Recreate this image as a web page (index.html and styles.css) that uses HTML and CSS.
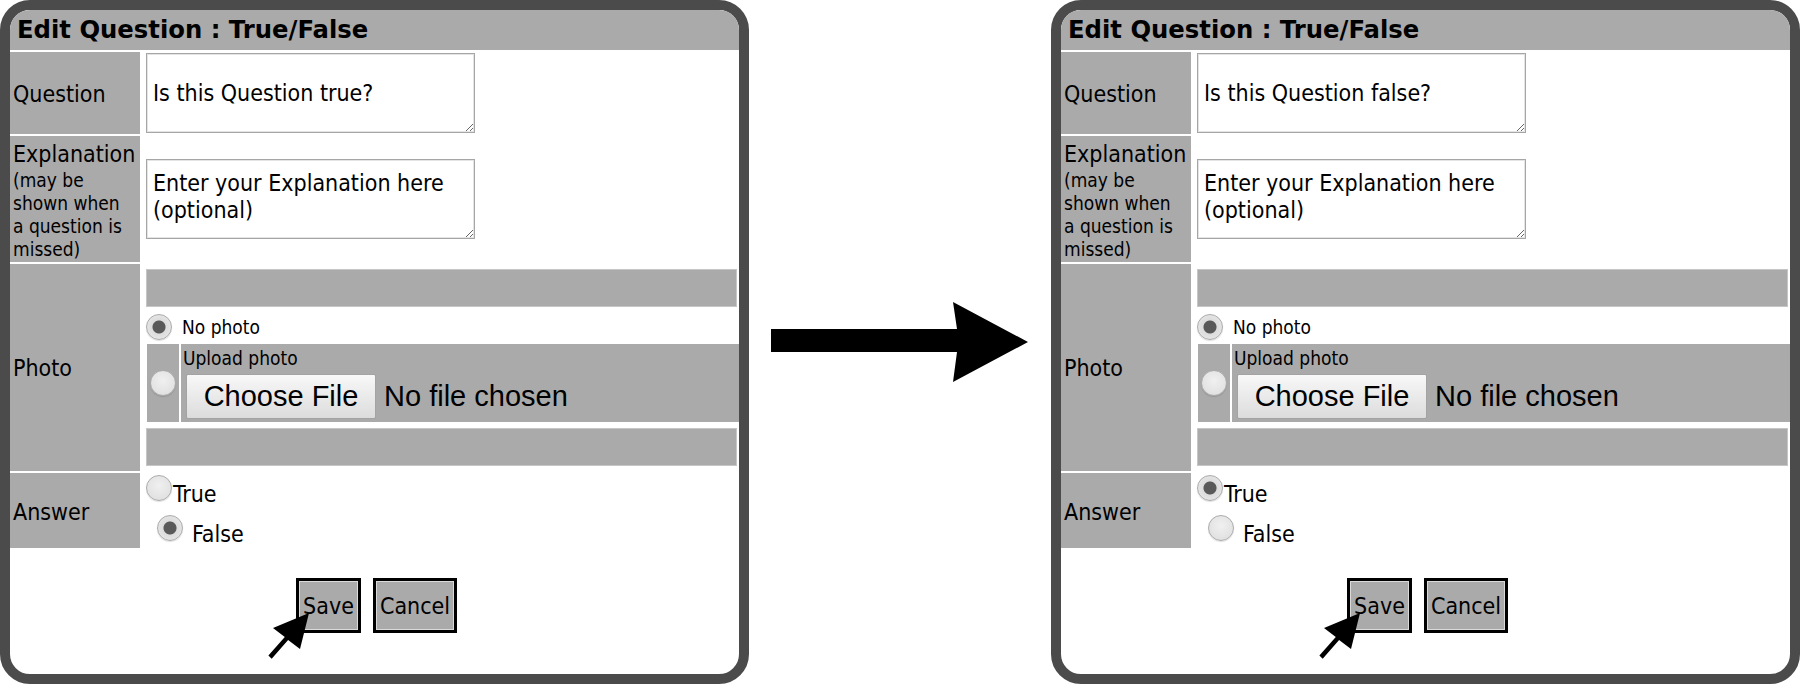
FILE: index.html
```html
<!DOCTYPE html>
<html lang="en">
<head>
<meta charset="utf-8">
<title>Edit Question : True/False</title>
<link rel="stylesheet" href="styles.css">
</head>
<body>
<div class="stage">
  <section class="panel">
    <h1 class="panel-title">Edit Question : True/False</h1>
    <div class="form-grid">
      <div class="lbl lbl-center">Question</div>
      <div class="cell"><textarea class="ta ta-question">Is this Question true?</textarea></div>

      <div class="lbl lbl-top">Explanation<span class="lbl-note">(may be shown when a question is missed)</span></div>
      <div class="cell cell-center"><textarea class="ta ta-expl">Enter your Explanation here (optional)</textarea></div>

      <div class="lbl lbl-center">Photo</div>
      <div class="cell photo-cell">
        <div class="bar"></div>
        <label class="nophoto"><input type="radio" class="radio" name="photo1" checked><span>No photo</span></label>
        <div class="upload">
          <div class="upload-radio"><input type="radio" class="radio" name="photo1"></div>
          <div class="upload-body">
            <div class="upload-title">Upload photo</div>
            <div class="file-row"><button class="file-btn" type="button">Choose File</button><span class="file-name">No file chosen</span></div>
          </div>
        </div>
        <div class="bar bar-last"></div>
      </div>

      <div class="lbl lbl-center lbl-answer">Answer</div>
      <div class="cell answer-cell">
        <label class="ans ans-true"><input type="radio" class="radio" name="ans1"><span class="ans-text">True</span></label>
        <label class="ans ans-false"><input type="radio" class="radio" name="ans1" checked><span class="ans-text">False</span></label>
      </div>
    </div>
    <div class="actions">
      <span class="save-wrap">
        <button class="act act-save" type="button">Save</button>
        <svg class="cursor" width="45" height="56" viewBox="0 0 45 56"><polygon points="41,8 5,23 16.8,32 0.4,50.5 3.7,53.8 20.1,35 32,44" fill="#000"/></svg>
      </span>
      <button class="act act-cancel" type="button">Cancel</button>
    </div>
  </section>

  <div class="between">
    <svg width="302" height="684" viewBox="0 0 302 684"><polygon points="22,329 208,329 204,302 279,342 204,382 208,352 22,352" fill="#000"/></svg>
  </div>

  <section class="panel">
    <h1 class="panel-title">Edit Question : True/False</h1>
    <div class="form-grid">
      <div class="lbl lbl-center">Question</div>
      <div class="cell"><textarea class="ta ta-question">Is this Question false?</textarea></div>

      <div class="lbl lbl-top">Explanation<span class="lbl-note">(may be shown when a question is missed)</span></div>
      <div class="cell cell-center"><textarea class="ta ta-expl">Enter your Explanation here (optional)</textarea></div>

      <div class="lbl lbl-center">Photo</div>
      <div class="cell photo-cell">
        <div class="bar"></div>
        <label class="nophoto"><input type="radio" class="radio" name="photo2" checked><span>No photo</span></label>
        <div class="upload">
          <div class="upload-radio"><input type="radio" class="radio" name="photo2"></div>
          <div class="upload-body">
            <div class="upload-title">Upload photo</div>
            <div class="file-row"><button class="file-btn" type="button">Choose File</button><span class="file-name">No file chosen</span></div>
          </div>
        </div>
        <div class="bar bar-last"></div>
      </div>

      <div class="lbl lbl-center lbl-answer">Answer</div>
      <div class="cell answer-cell">
        <label class="ans ans-true"><input type="radio" class="radio" name="ans2" checked><span class="ans-text">True</span></label>
        <label class="ans ans-false"><input type="radio" class="radio" name="ans2"><span class="ans-text">False</span></label>
      </div>
    </div>
    <div class="actions">
      <span class="save-wrap">
        <button class="act act-save" type="button">Save</button>
        <svg class="cursor" width="45" height="56" viewBox="0 0 45 56"><polygon points="41,8 5,23 16.8,32 0.4,50.5 3.7,53.8 20.1,35 32,44" fill="#000"/></svg>
      </span>
      <button class="act act-cancel" type="button">Cancel</button>
    </div>
  </section>
</div>
</body>
</html>
```

FILE: styles.css
```css
* { box-sizing: border-box; }

html, body {
  margin: 0;
  padding: 0;
  background: #fff;
}

body {
  width: 1800px;
  height: 684px;
  overflow: hidden;
  font-family: "DejaVu Sans Condensed", "DejaVu Sans", sans-serif;
  color: #000;
}

.stage {
  display: flex;
  height: 684px;
}

.panel {
  flex: none;
  width: 749px;
  height: 684px;
  border: 10px solid #4b4b4b;
  border-radius: 30px;
  overflow: hidden;
  background: #fff;
  display: flex;
  flex-direction: column;
}

.panel-title {
  margin: 0;
  height: 40px;
  background: #aaaaaa;
  font-family: "DejaVu Sans", sans-serif;
  font-weight: bold;
  font-size: 24.3px;
  line-height: 40px;
  padding-left: 7px;
  white-space: nowrap;
}

.form-grid {
  display: grid;
  grid-template-columns: 130px 1fr;
  column-gap: 5px;
  row-gap: 2px;
  margin-top: 2px;
}

.lbl {
  background: #aaaaaa;
  font-size: 23px;
  line-height: 27.8px;
  padding: 0 3px;
}

.lbl-center {
  display: flex;
  align-items: center;
  padding-top: 4px;
}

.lbl-answer {
  padding-top: 6px;
}

.lbl-top {
  padding: 5px 3px 1px;
}

.lbl-note {
  display: block;
  max-width: 116px;
  font-size: 19px;
  line-height: 23px;
}

.cell {
  padding: 1px 0 1px 1px;
}

.cell-center {
  display: flex;
  align-items: center;
}

.ta {
  display: block;
  width: 329px;
  height: 80px;
  margin: 0;
  border: 1px solid #a6a6a6;
  box-shadow: inset 0 0 0 1px #e4e4e4;
  font-family: "DejaVu Sans Condensed", "DejaVu Sans", sans-serif;
  font-size: 23px;
  line-height: 27.5px;
  padding: 10px 6px 6px;
  color: #000;
  background: #fff;
  overflow: hidden;
  resize: both;
}

.ta-question {
  padding-top: 26px;
}

.photo-cell {
  padding: 5px 0 5px 1px;
}

.bar {
  height: 38px;
  background: #aaaaaa;
  border: 1px solid #c6c6c6;
  margin-right: 2px;
}

.bar-last {
  margin-top: 6px;
}

.nophoto {
  display: flex;
  align-items: center;
  gap: 10px;
  height: 37px;
  padding-top: 3px;
  font-size: 19px;
}

.upload {
  display: flex;
  gap: 2px;
  height: 78px;
  margin-left: 1px;
}

.upload-radio {
  flex: none;
  width: 32px;
  background: #aaaaaa;
  display: flex;
  align-items: center;
  justify-content: center;
}

.upload-body {
  flex: 1;
  background: #aaaaaa;
  padding: 3px 0 0 2px;
}

.upload-title {
  font-size: 19px;
  line-height: 23px;
}

.file-row {
  display: flex;
  align-items: center;
  margin-top: 4px;
  padding-left: 3px;
}

.file-btn {
  flex: none;
  width: 190px;
  height: 45px;
  padding: 0;
  margin: 0;
  font-family: "Liberation Sans", Arial, sans-serif;
  font-size: 29px;
  color: #000;
  border: 1px solid #a3a3a3;
  border-radius: 2px;
  background: linear-gradient(#f8f8f8, #dcdcdc);
}

.file-name {
  margin-left: 8px;
  font-family: "Liberation Sans", Arial, sans-serif;
  font-size: 29px;
  white-space: nowrap;
}

.radio {
  -webkit-appearance: none;
  appearance: none;
  flex: none;
  width: 26px;
  height: 26px;
  margin: 0;
  border-radius: 50%;
  border: 1px solid #ababab;
  background: radial-gradient(circle at 50% 40%, #f0f0f0 0, #dcdcdc 100%);
  box-shadow: 0 1px 1px rgba(0, 0, 0, 0.12);
}

.radio:checked {
  background: radial-gradient(circle, #595959 0 6px, #dcdcdc 7px, #ececec 100%);
}

.answer-cell {
  padding: 0 0 0 1px;
}

.ans {
  display: flex;
  align-items: flex-start;
  font-size: 23px;
  line-height: 27.6px;
}

.ans-true {
  height: 37px;
}

.ans-true .radio {
  margin-top: 2px;
}

.ans-true .ans-text {
  margin: 8px 0 0 1px;
}

.ans-false {
  height: 38px;
}

.ans-false .radio {
  margin: 5px 0 0 11px;
}

.ans-false .ans-text {
  margin: 11px 0 0 9px;
}

.actions {
  display: flex;
  justify-content: center;
  gap: 12px;
  margin-top: 30px;
  padding-left: 4px;
}

.save-wrap {
  position: relative;
  display: block;
}

.act {
  display: block;
  height: 55px;
  padding: 2px 0 0;
  margin: 0;
  border: 3px solid #000;
  background: #aaaaaa;
  box-shadow: inset 0 0 0 1px #dadada;
  font-family: "DejaVu Sans Condensed", "DejaVu Sans", sans-serif;
  font-size: 23px;
  color: #000;
}

.act-save {
  width: 65px;
}

.act-cancel {
  width: 84px;
}

.cursor {
  position: absolute;
  left: -28px;
  top: 27px;
}

.between {
  flex: none;
  width: 302px;
  height: 684px;
}

.between svg {
  display: block;
}
```
